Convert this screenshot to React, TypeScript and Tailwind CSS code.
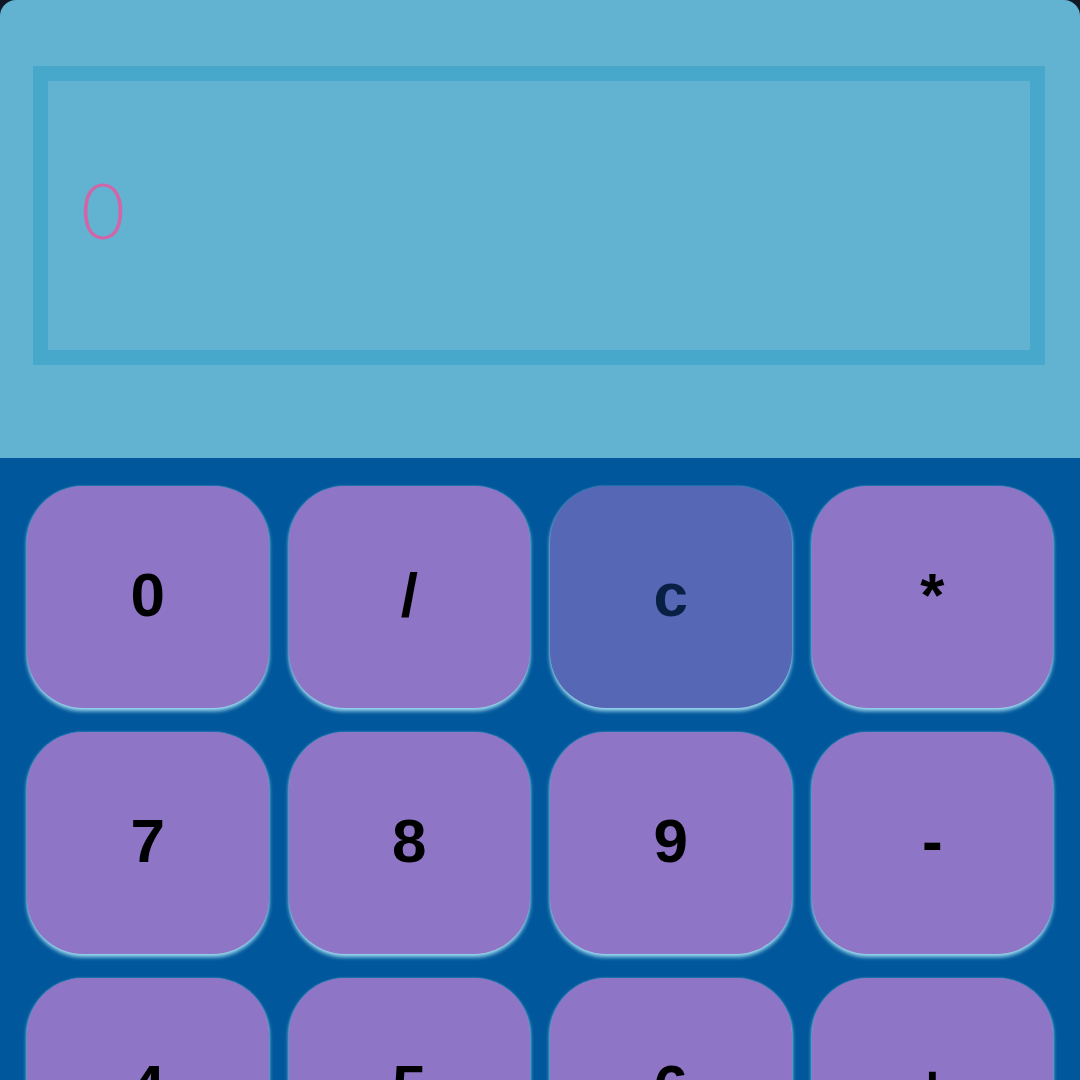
import { useState } from "react";

const keys = ["0", "/", "c", "*", "7", "8", "9", "-", "4", "5", "6", "+", "1", "2", "3", "="];

export default function App() {
  const [display, setDisplay] = useState("0");

  const press = (k: string) => {
    if (k === "c") return setDisplay("0");
    setDisplay((d) => (d === "0" ? k : d + k));
  };

  return (
    <div className="min-h-screen bg-[#101828]">
      <div className="overflow-hidden rounded-t-[16px]">
        {/* Display */}
        <div className="h-[458px] bg-[#61b3d1] pl-[33px] pr-[35px] pt-[66px]">
          <div className="flex h-[299px] items-center border-[15px] border-[#48a8cb] pb-[12px] pl-[33px]">
            <span className="font-['Lato',sans-serif] text-[76px] font-light leading-none text-[#d066a8]">
              {display}
            </span>
          </div>
        </div>

        {/* Keypad */}
        <div className="grid grid-cols-4 gap-x-[20px] gap-y-[24px] bg-[#01579b] px-[27px] pb-8 pt-[28px]">
          {keys.map((k) => (
            <button
              key={k}
              onClick={() => press(k)}
              className={`flex h-[222px] items-center justify-center rounded-[56px] pb-[6px] font-['Liberation_Sans',Arial,sans-serif] text-[62px] font-bold shadow-[0_3px_4px_rgba(170,228,245,0.95),0_0_2px_rgba(140,210,235,0.6)] ${
                k === "c" ? "bg-[#5567b5] text-[#0a1f44]" : "bg-[#8e75c6] text-black"
              }`}
            >
              {k}
            </button>
          ))}
        </div>
      </div>
    </div>
  );
}
